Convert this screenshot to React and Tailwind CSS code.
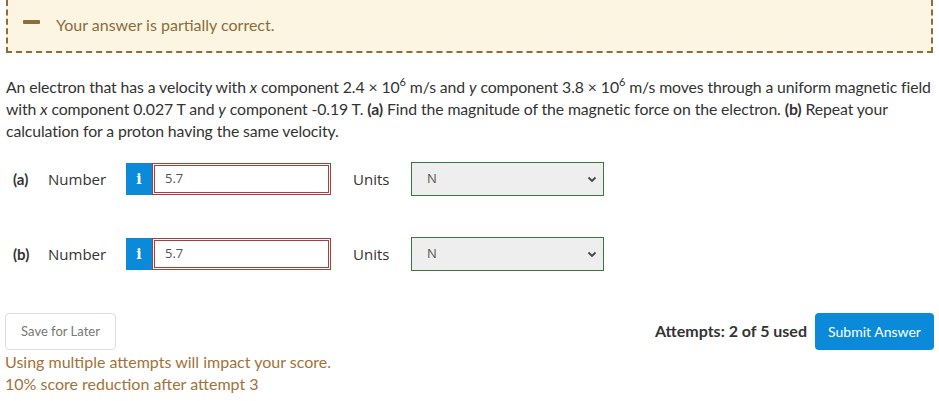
import React from "react";

function InfoBtn() {
  return (
    <div className="w-[26px] h-[32px] bg-[#0a8ad8] flex items-center justify-center text-white font-bold text-[14px] [font-family:'DejaVu_Serif',serif]">
      i
    </div>
  );
}

function Row({ label }) {
  return (
    <div className="flex items-center h-[34px]">
      <span className="ml-[13px] w-[35px] font-bold text-[15px] text-[#333] [font-family:Lato,sans-serif]">{label}</span>
      <span className="w-[78px] text-[15px] text-[#333] [font-family:'Open_Sans',sans-serif]">Number</span>
      <InfoBtn />
      <div className="w-[179px] h-[32px] border-[3px] border-double border-[#b03a3a] bg-white flex items-center pl-[10px] text-[13px] text-[#555] [font-family:'Open_Sans',sans-serif]">
        5.7
      </div>
      <span className="ml-[22px] w-[58px] text-[15px] text-[#333] [font-family:'Open_Sans',sans-serif]">Units</span>
      <div className="w-[193px] h-[34px] border border-[#3c763d] bg-[#eee] flex items-center justify-between pl-[15px] pr-[6px] text-[13px] text-[#555] [font-family:'Open_Sans',sans-serif]">
        <span>N</span>
        <svg width="10" height="10" viewBox="0 0 10 10"><path d="M1.5 3.5 L5 7 L8.5 3.5" fill="none" stroke="#444" strokeWidth="1.8" /></svg>
      </div>
    </div>
  );
}

function Sup() {
  return <sup className="text-[11px] leading-none align-baseline relative top-[-7px]">6</sup>;
}

export default function App() {
  return (
    <div className="w-[939px] h-[401px] bg-white overflow-hidden [font-family:Lato,sans-serif]">
      <div className="mx-[6px] border-x-2 border-b-2 border-dashed border-[#8c6d3c] bg-[#fcf5e2] h-[53px] flex items-center pl-[15px]">
        <span className="w-[17px] h-[4px] bg-[#8c6d3c] rounded-[1px] mr-[16px] mb-[7px]"></span>
        <span className="text-[16px] text-[#8a6d3b] mb-[1px]">Your answer is partially correct.</span>
      </div>
      <p className="ml-[6px] mr-[2px] mt-[23px] text-[15.8px] leading-[22px] text-[#333] tracking-[-0.1px]">
        An electron that has a velocity with <i>x</i> component 2.4 × 10<Sup /> m/s and <i>y</i> component 3.8 × 10<Sup /> m/s moves through a uniform magnetic field with <i>x</i> component 0.027 T and <i>y</i> component -0.19 T. <b>(a)</b> Find the magnitude of the magnetic force on the electron. <b>(b)</b> Repeat your calculation for a proton having the same velocity.
      </p>
      <div className="mt-[20px]">
        <Row label="(a)" />
      </div>
      <div className="mt-[41px]">
        <Row label="(b)" />
      </div>
      <div className="mt-[42px] mx-[5px] flex items-center justify-between">
        <div className="w-[111px] h-[37px] border border-[#ddd] rounded-[4px] flex items-center justify-center text-[13px] text-[#777]">
          Save for Later
        </div>
        <div className="flex items-center">
          <span className="text-[16px] font-bold text-[#333] mr-[8px] mb-[2px]">Attempts: 2 of 5 used</span>
          <div className="w-[119px] h-[37px] bg-[#0a8ad8] rounded-[4px] flex items-center justify-center text-[14px] text-white">
            Submit Answer
          </div>
        </div>
      </div>
      <div className="mx-[5px] mt-[1px] text-[16px] leading-[22px] text-[#a0733a]">
        <div>Using multiple attempts will impact your score.</div>
        <div>10% score reduction after attempt 3</div>
      </div>
    </div>
  );
}
